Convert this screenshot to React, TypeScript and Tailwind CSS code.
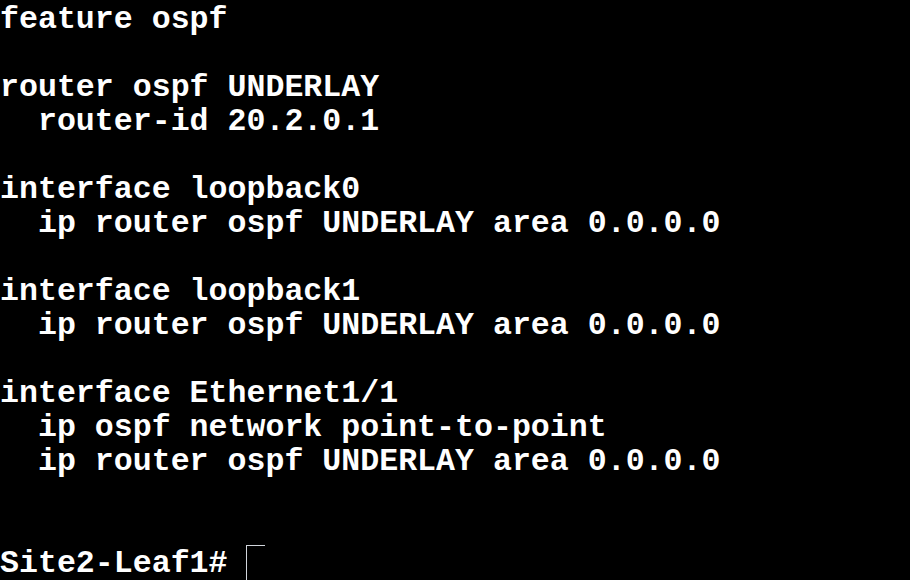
import React from "react";

const lines = [
  "feature ospf",
  "",
  "router ospf UNDERLAY",
  "  router-id 20.2.0.1",
  "",
  "interface loopback0",
  "  ip router ospf UNDERLAY area 0.0.0.0",
  "",
  "interface loopback1",
  "  ip router ospf UNDERLAY area 0.0.0.0",
  "",
  "interface Ethernet1/1",
  "  ip ospf network point-to-point",
  "  ip router ospf UNDERLAY area 0.0.0.0",
  "",
  "",
];

const App = () => {
  return (
    <div
      className="w-[910px] h-[580px] overflow-hidden bg-black text-white font-bold text-[31.6px] leading-[34px] pt-[3px]"
      style={{ fontFamily: '"Liberation Mono", "Courier New", monospace' }}
    >
      {lines.map((line, i) => (
        <div key={i} className="h-[34px] whitespace-pre">
          {line}
        </div>
      ))}
      <div className="h-[34px] whitespace-pre flex items-start">
        <span>Site2-Leaf1# </span>
        <span className="-mt-[2px] w-[19px] h-[40px] border-l border-t border-gray-300" />
      </div>
    </div>
  );
};

export default App;
